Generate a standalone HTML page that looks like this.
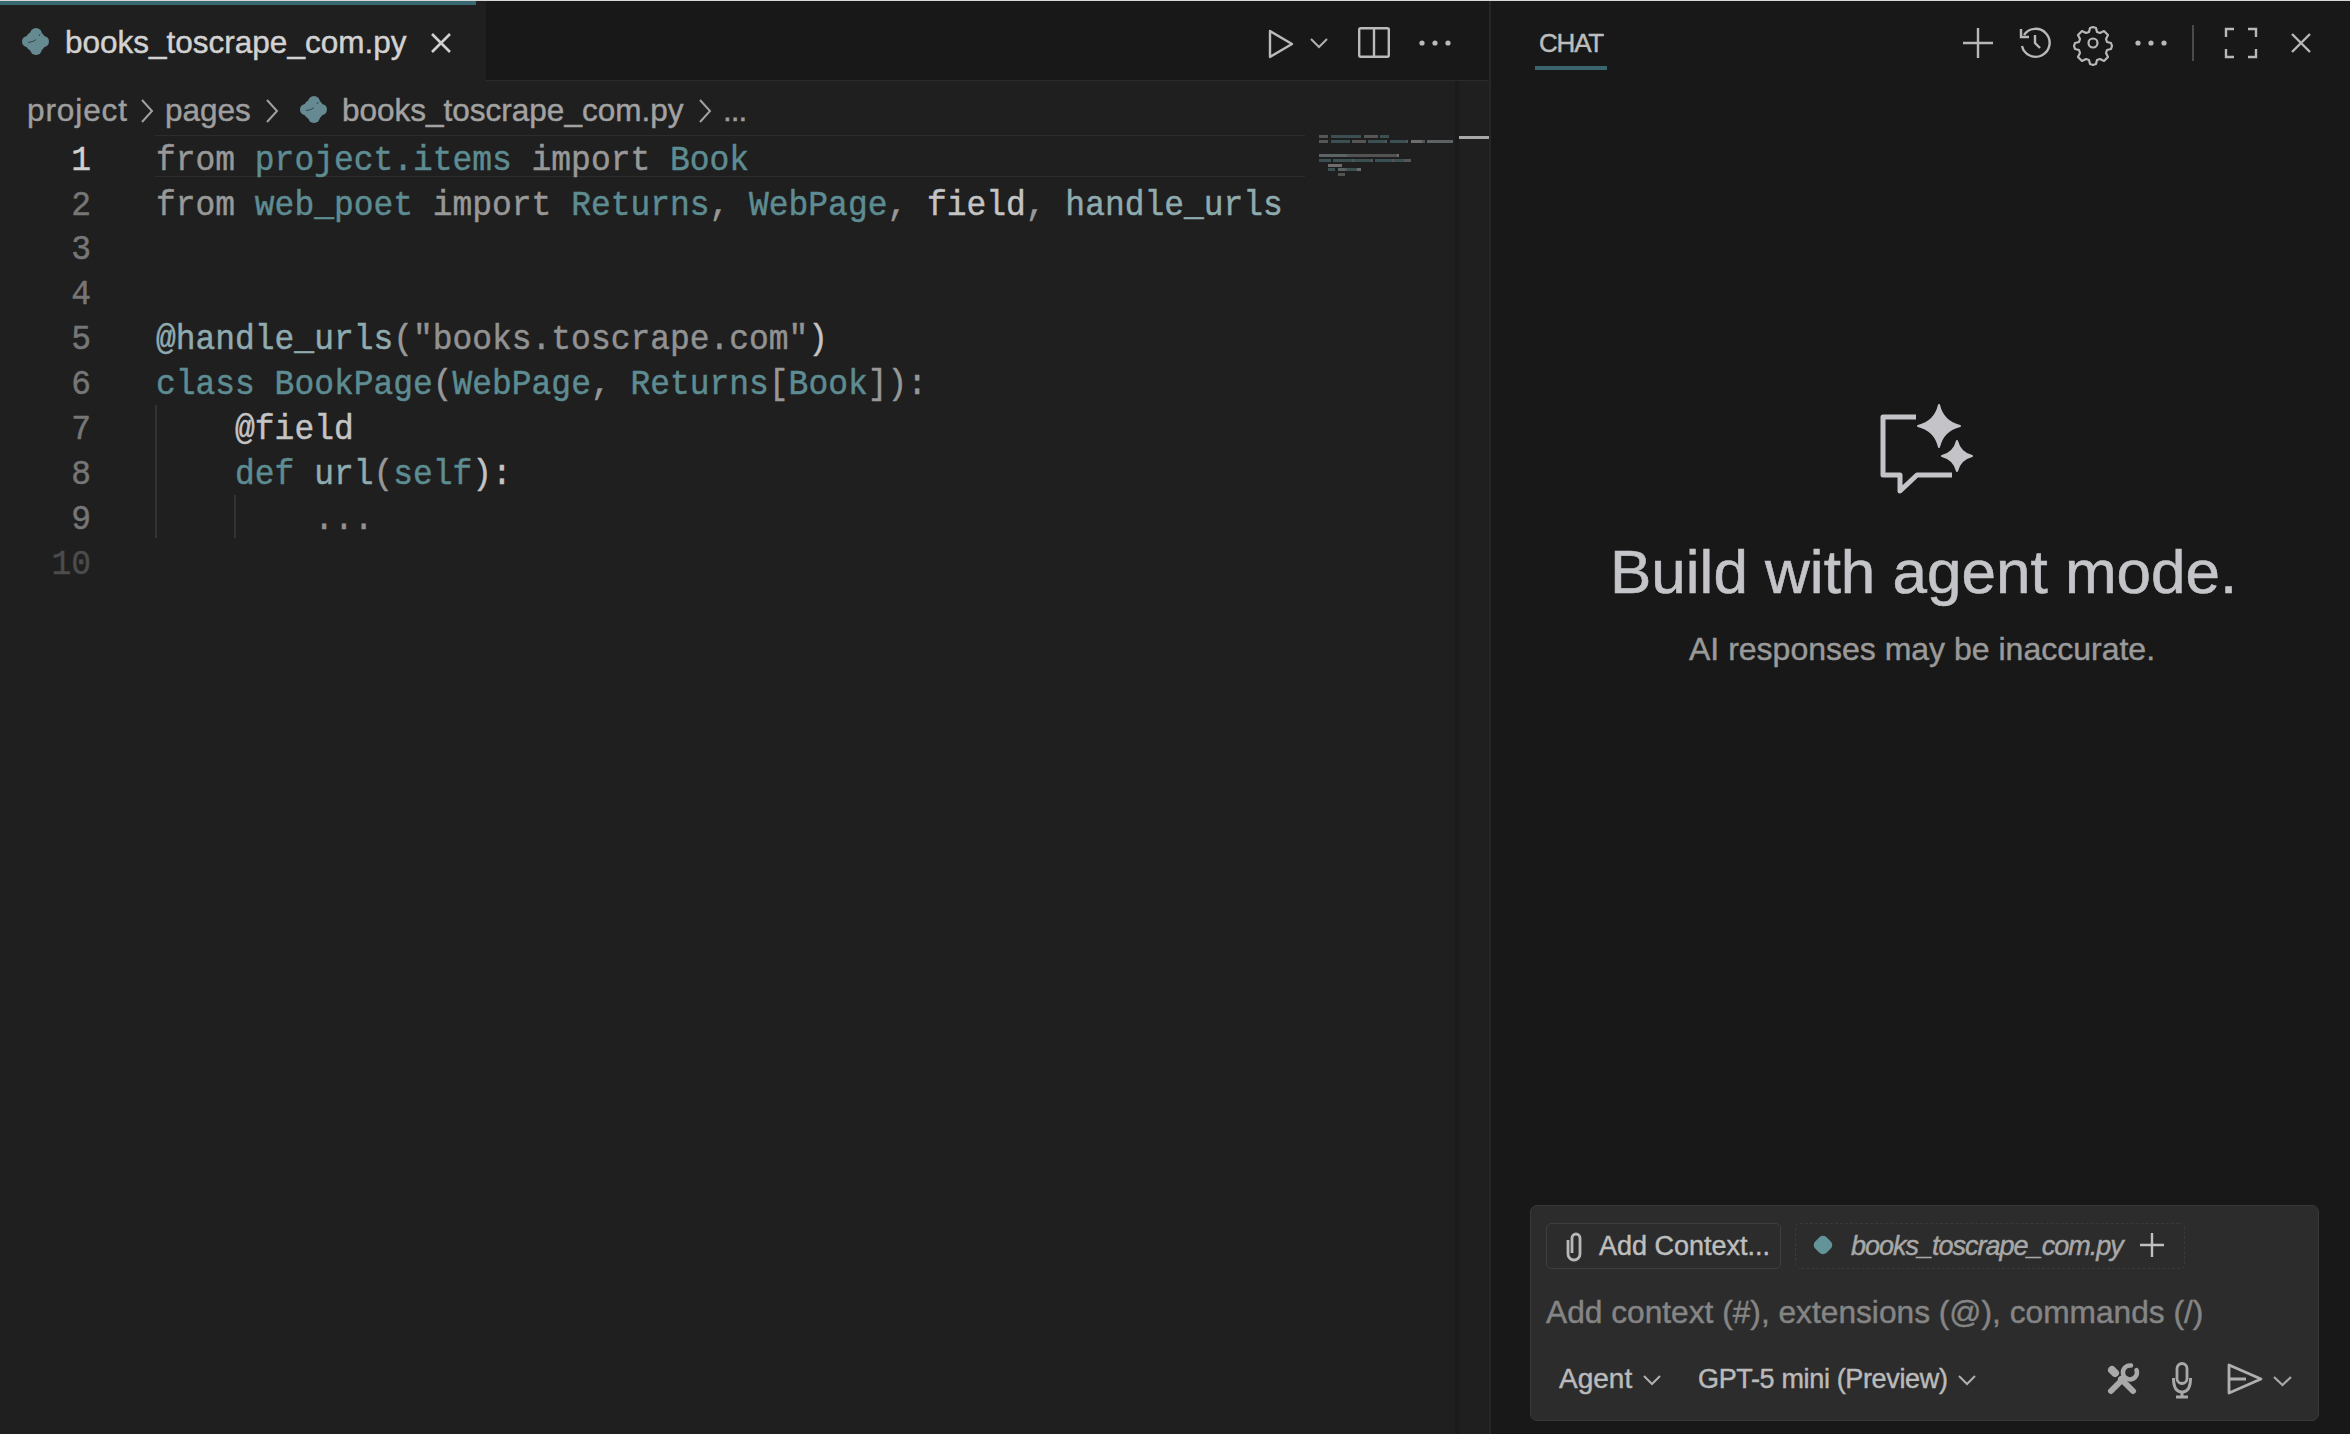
<!DOCTYPE html>
<html><head><meta charset="utf-8">
<style>
html,body{margin:0;padding:0;}
body{width:2350px;height:1434px;position:relative;overflow:hidden;background:#181818;font-family:"Liberation Sans",sans-serif;color:#cccccc;}
.a{position:absolute;}
.t{position:absolute;white-space:pre;line-height:normal;-webkit-text-stroke-width:0.45px;}
.mono{font-family:"Liberation Mono",monospace;}
.g{color:#989898}
.c{color:#5d8c92}
.w{color:#c4c4c4}
.s{color:#929292}
.y{color:#8fabaf}
.code{transform:scaleY(1.08);transform-origin:0 27.4px}
svg{position:absolute;overflow:visible}
</style></head>
<body>
<div class="a" style="left:0;top:0;width:2350px;height:1px;background:#d8d8d8"></div>

<!-- ===== EDITOR ===== -->
<div class="a" style="left:0;top:1px;width:1490px;height:1433px;background:#1f1f1f"></div>
<div class="a" style="left:0;top:1px;width:1490px;height:80px;background:#181818"></div>
<div class="a" style="left:486px;top:80px;width:1004px;height:1px;background:#2a2a2a"></div>
<div class="a" style="left:0;top:1px;width:486px;height:80px;background:#1f1f1f"></div>
<div class="a" style="left:0;top:1px;width:476px;height:4px;background:#386870"></div>

<!-- python icon tab -->
<svg style="left:22px;top:28px" width="27" height="27" viewBox="0 0 27 27"><g fill="#668a92"><rect x="8" y="0" width="12" height="27" rx="6"/><rect x="0" y="8" width="27" height="11" rx="5.5"/><circle cx="13.5" cy="13.5" r="10.5"/></g><path d="M6 14.5L11 13.5L14 11.5M17 8L18 6" stroke="#33474c" stroke-width="1" fill="none"/></svg>
<div class="t" style="left:65px;top:23.5px;font-size:31.5px;color:#d2d2d2">books_toscrape_com.py</div>
<svg style="left:431px;top:33px" width="20" height="20" viewBox="0 0 20 20"><path d="M1 1L19 19M19 1L1 19" stroke="#d0d0d0" stroke-width="2.6"/></svg>

<!-- editor toolbar -->
<svg style="left:1268px;top:29px" width="26" height="30" viewBox="0 0 26 30"><path d="M2 2L24 15L2 28Z" fill="none" stroke="#bababa" stroke-width="2.4" stroke-linejoin="round"/></svg>
<svg style="left:1310px;top:38px" width="18" height="10" viewBox="0 0 18 10"><path d="M1 1L9 9L17 1" fill="none" stroke="#b0b0b0" stroke-width="2"/></svg>
<svg style="left:1358px;top:27px" width="32" height="31" viewBox="0 0 32 31"><rect x="1.2" y="1.2" width="29.6" height="28.6" rx="1.5" fill="none" stroke="#bababa" stroke-width="2.4"/><path d="M16 1V30" stroke="#bababa" stroke-width="2.4"/></svg>
<svg style="left:1419px;top:40px" width="32" height="6" viewBox="0 0 32 6"><circle cx="3" cy="3" r="2.6" fill="#bababa"/><circle cx="16" cy="3" r="2.6" fill="#bababa"/><circle cx="29" cy="3" r="2.6" fill="#bababa"/></svg>

<!-- breadcrumb -->
<div class="t" style="left:27px;top:91.5px;font-size:31.5px;color:#9e9e9e;letter-spacing:0.9px">project</div>
<svg style="left:140px;top:99px" width="14" height="24" viewBox="0 0 14 24"><path d="M2 1L12 12L2 23" fill="none" stroke="#a0a0a0" stroke-width="2"/></svg>
<div class="t" style="left:165px;top:91.5px;font-size:31.5px;color:#9e9e9e">pages</div>
<svg style="left:265px;top:99px" width="14" height="24" viewBox="0 0 14 24"><path d="M2 1L12 12L2 23" fill="none" stroke="#a0a0a0" stroke-width="2"/></svg>
<svg style="left:300px;top:96px" width="27" height="27" viewBox="0 0 27 27"><g fill="#668a92"><rect x="8" y="0" width="12" height="27" rx="6"/><rect x="0" y="8" width="27" height="11" rx="5.5"/><circle cx="13.5" cy="13.5" r="10.5"/></g><path d="M6 14.5L11 13.5L14 11.5M17 8L18 6" stroke="#33474c" stroke-width="1" fill="none"/></svg>
<div class="t" style="left:342px;top:91.5px;font-size:31.5px;color:#a2a2a2">books_toscrape_com.py</div>
<svg style="left:698px;top:99px" width="14" height="24" viewBox="0 0 14 24"><path d="M2 1L12 12L2 23" fill="none" stroke="#a0a0a0" stroke-width="2"/></svg>
<div class="t" style="left:723px;top:91.5px;font-size:31.5px;color:#9e9e9e;letter-spacing:-1px">...</div>

<!-- current line highlight -->
<div class="a" style="left:155px;top:135px;width:1150px;height:1px;background:#2c2c2c"></div>
<div class="a" style="left:155px;top:176px;width:1150px;height:1px;background:#2c2c2c"></div>

<!-- indent guides -->
<div class="a" style="left:155px;top:405px;width:2px;height:133px;background:#333333"></div>
<div class="a" style="left:234px;top:495px;width:2px;height:43px;background:#333333"></div>

<div class="t mono code" style="left:0;width:91px;text-align:right;top:142.6px;font-size:32.95px;color:#d0d0d0">1</div>
<div class="t mono code" style="left:156px;top:142.6px;font-size:32.95px"><span class="g">from </span><span class="c">project.items</span><span class="g"> import </span><span class="c">Book</span></div>
<div class="t mono code" style="left:0;width:91px;text-align:right;top:187.5px;font-size:32.95px;color:#767676">2</div>
<div class="t mono code" style="left:156px;top:187.5px;font-size:32.95px"><span class="g">from </span><span class="c">web_poet</span><span class="g"> import </span><span class="c">Returns</span><span class="g">, </span><span class="c">WebPage</span><span class="g">, </span><span class="w">field</span><span class="g">, </span><span class="y">handle_urls</span></div>
<div class="t mono code" style="left:0;width:91px;text-align:right;top:232.4px;font-size:32.95px;color:#767676">3</div>
<div class="t mono code" style="left:0;width:91px;text-align:right;top:277.3px;font-size:32.95px;color:#767676">4</div>
<div class="t mono code" style="left:0;width:91px;text-align:right;top:322.2px;font-size:32.95px;color:#767676">5</div>
<div class="t mono code" style="left:156px;top:322.2px;font-size:32.95px"><span class="y">@handle_urls</span><span class="g">(</span><span class="s">"books.toscrape.com"</span><span class="w">)</span></div>
<div class="t mono code" style="left:0;width:91px;text-align:right;top:367.1px;font-size:32.95px;color:#767676">6</div>
<div class="t mono code" style="left:156px;top:367.1px;font-size:32.95px"><span class="c">class </span><span class="c">BookPage</span><span class="g">(</span><span class="c">WebPage</span><span class="g">, </span><span class="c">Returns</span><span class="g">[</span><span class="c">Book</span><span class="g">]):</span></div>
<div class="t mono code" style="left:0;width:91px;text-align:right;top:412.0px;font-size:32.95px;color:#767676">7</div>
<div class="t mono code" style="left:156px;top:412.0px;font-size:32.95px"><span class="g">    </span><span class="w">@field</span></div>
<div class="t mono code" style="left:0;width:91px;text-align:right;top:456.9px;font-size:32.95px;color:#767676">8</div>
<div class="t mono code" style="left:156px;top:456.9px;font-size:32.95px"><span class="g">    </span><span class="c">def </span><span class="y">url</span><span class="g">(</span><span class="c">self</span><span class="w">):</span></div>
<div class="t mono code" style="left:0;width:91px;text-align:right;top:501.8px;font-size:32.95px;color:#767676">9</div>
<div class="t mono code" style="left:156px;top:501.8px;font-size:32.95px"><span class="g">        </span><span class="s">...</span></div>
<div class="t mono code" style="left:0;width:91px;text-align:right;top:546.7px;font-size:32.95px;color:#4c4c4c">10</div>
<div class="a" style="left:1319.0px;top:135.0px;width:9.4px;height:3px;background:#989898;opacity:0.45"></div>
<div class="a" style="left:1330.8px;top:135.0px;width:30.6px;height:3px;background:#5d8c92;opacity:0.45"></div>
<div class="a" style="left:1363.7px;top:135.0px;width:14.1px;height:3px;background:#989898;opacity:0.45"></div>
<div class="a" style="left:1380.1px;top:135.0px;width:9.4px;height:3px;background:#5d8c92;opacity:0.45"></div>
<div class="a" style="left:1319.0px;top:139.8px;width:9.4px;height:3px;background:#989898;opacity:0.45"></div>
<div class="a" style="left:1330.8px;top:139.8px;width:18.8px;height:3px;background:#5d8c92;opacity:0.45"></div>
<div class="a" style="left:1351.9px;top:139.8px;width:14.1px;height:3px;background:#989898;opacity:0.45"></div>
<div class="a" style="left:1368.3px;top:139.8px;width:16.4px;height:3px;background:#5d8c92;opacity:0.45"></div>
<div class="a" style="left:1384.8px;top:139.8px;width:2.4px;height:3px;background:#989898;opacity:0.45"></div>
<div class="a" style="left:1389.5px;top:139.8px;width:16.4px;height:3px;background:#5d8c92;opacity:0.45"></div>
<div class="a" style="left:1406.0px;top:139.8px;width:2.4px;height:3px;background:#989898;opacity:0.45"></div>
<div class="a" style="left:1410.7px;top:139.8px;width:11.8px;height:3px;background:#cccccc;opacity:0.45"></div>
<div class="a" style="left:1422.4px;top:139.8px;width:2.4px;height:3px;background:#989898;opacity:0.45"></div>
<div class="a" style="left:1427.1px;top:139.8px;width:25.9px;height:3px;background:#a3b6b8;opacity:0.45"></div>
<div class="a" style="left:1319.0px;top:154.0px;width:28.2px;height:3px;background:#a3b6b8;opacity:0.45"></div>
<div class="a" style="left:1347.2px;top:154.0px;width:2.4px;height:3px;background:#989898;opacity:0.45"></div>
<div class="a" style="left:1349.5px;top:154.0px;width:47.0px;height:3px;background:#929292;opacity:0.45"></div>
<div class="a" style="left:1396.5px;top:154.0px;width:2.4px;height:3px;background:#cccccc;opacity:0.45"></div>
<div class="a" style="left:1319.0px;top:158.8px;width:11.8px;height:3px;background:#5d8c92;opacity:0.45"></div>
<div class="a" style="left:1333.1px;top:158.8px;width:18.8px;height:3px;background:#5d8c92;opacity:0.45"></div>
<div class="a" style="left:1351.9px;top:158.8px;width:2.4px;height:3px;background:#989898;opacity:0.45"></div>
<div class="a" style="left:1354.2px;top:158.8px;width:16.4px;height:3px;background:#5d8c92;opacity:0.45"></div>
<div class="a" style="left:1370.7px;top:158.8px;width:2.4px;height:3px;background:#989898;opacity:0.45"></div>
<div class="a" style="left:1375.4px;top:158.8px;width:16.4px;height:3px;background:#5d8c92;opacity:0.45"></div>
<div class="a" style="left:1391.8px;top:158.8px;width:2.4px;height:3px;background:#989898;opacity:0.45"></div>
<div class="a" style="left:1394.2px;top:158.8px;width:9.4px;height:3px;background:#5d8c92;opacity:0.45"></div>
<div class="a" style="left:1403.6px;top:158.8px;width:7.1px;height:3px;background:#989898;opacity:0.45"></div>
<div class="a" style="left:1328.4px;top:163.5px;width:14.1px;height:3px;background:#cccccc;opacity:0.45"></div>
<div class="a" style="left:1328.4px;top:168.2px;width:7.1px;height:3px;background:#5d8c92;opacity:0.45"></div>
<div class="a" style="left:1337.8px;top:168.2px;width:7.1px;height:3px;background:#a3b6b8;opacity:0.45"></div>
<div class="a" style="left:1344.8px;top:168.2px;width:2.4px;height:3px;background:#989898;opacity:0.45"></div>
<div class="a" style="left:1347.2px;top:168.2px;width:9.4px;height:3px;background:#5d8c92;opacity:0.45"></div>
<div class="a" style="left:1356.6px;top:168.2px;width:4.7px;height:3px;background:#cccccc;opacity:0.45"></div>
<div class="a" style="left:1337.8px;top:173.0px;width:7.1px;height:3px;background:#929292;opacity:0.45"></div>

<!-- scrollbar -->
<div class="a" style="left:1455px;top:81px;width:4px;height:1353px;background:#1a1a1a"></div>
<div class="a" style="left:1459px;top:136px;width:30px;height:3px;background:#a8a8a8"></div>
<!-- divider -->
<div class="a" style="left:1489px;top:1px;width:2px;height:1433px;background:#262626"></div>

<!-- ===== CHAT ===== -->
<div class="t" style="left:1539px;top:28px;font-size:26px;color:#bdbdbd;letter-spacing:-1.2px">CHAT</div>
<div class="a" style="left:1535px;top:66px;width:72px;height:4px;background:#3a656c"></div>

<!-- header icons -->
<svg style="left:1963px;top:28px" width="30" height="30" viewBox="0 0 30 30"><path d="M15 0V30M0 15H30" stroke="#b8b8b8" stroke-width="2.4"/></svg>
<svg style="left:2018px;top:26px" width="34" height="34" viewBox="0 0 34 34"><path d="M6 9A14 14 0 1 1 4 20" fill="none" stroke="#b8b8b8" stroke-width="2.4"/><path d="M3 3V11H11" fill="none" stroke="#b8b8b8" stroke-width="2.4"/><path d="M17 9V17L22 22" fill="none" stroke="#b8b8b8" stroke-width="2.4"/></svg>
<svg style="left:2075px;top:25px" width="36" height="36" viewBox="0 0 36 36"><path d="M18 2l3 1 1 4 3 1 4-2 2 2 2 2-2 4 1 3 4 1 1 3-1 3-4 1-1 3 2 4-2 2-2 2-4-2-3 1-1 4-3 1-3-1-1-4-3-1-4 2-2-2-2-2 2-4-1-3-4-1-1-3 1-3 4-1 1-3-2-4 2-2 2-2 4 2 3-1 1-4z" fill="none" stroke="#b8b8b8" stroke-width="2.2" stroke-linejoin="round"/><circle cx="18" cy="18" r="4.5" fill="none" stroke="#b8b8b8" stroke-width="2.2"/></svg>
<svg style="left:2135px;top:40px" width="32" height="6" viewBox="0 0 32 6"><circle cx="3" cy="3" r="2.6" fill="#b8b8b8"/><circle cx="16" cy="3" r="2.6" fill="#b8b8b8"/><circle cx="29" cy="3" r="2.6" fill="#b8b8b8"/></svg>
<div class="a" style="left:2192px;top:25px;width:2px;height:36px;background:#4a4a4a"></div>
<svg style="left:2225px;top:28px" width="32" height="30" viewBox="0 0 32 30"><path d="M1 9V1H9M23 1H31V9M31 21V29H23M9 29H1V21" fill="none" stroke="#b8b8b8" stroke-width="2.4"/></svg>
<svg style="left:2291px;top:33px" width="20" height="20" viewBox="0 0 20 20"><path d="M1 1L19 19M19 1L1 19" stroke="#b8b8b8" stroke-width="2.4"/></svg>

<!-- sparkle chat icon -->
<svg style="left:1860px;top:395px" width="120" height="110" viewBox="0 0 120 110">
 <path d="M56 22H23V80H40V96L57 80H92" fill="none" stroke="#c4c4c8" stroke-width="5" stroke-linejoin="round"/>
 <path d="M79 10Q83 27 100 31Q83 35 79 52Q75 35 58 31Q75 27 79 10Z" fill="#c4c4c8" stroke="#c4c4c8" stroke-width="2" stroke-linejoin="round"/>
 <path d="M97 46Q100 58 112 61Q100 64 97 76Q94 64 82 61Q94 58 97 46Z" fill="#c4c4c8" stroke="#c4c4c8" stroke-width="2" stroke-linejoin="round"/>
</svg>
<div class="t" style="left:1610px;top:536px;font-size:62px;color:#c4c5c9;-webkit-text-stroke:0.6px #c4c5c9">Build with agent mode.</div>
<div class="t" style="left:1689px;top:631px;font-size:32px;color:#9a9a9a">AI responses may be inaccurate.</div>

<!-- input box -->
<div class="a" style="left:1530px;top:1205px;width:787px;height:214px;background:#2c2c2c;border:1px solid #383838;border-radius:7px"></div>
<div class="a" style="left:1546px;top:1223px;width:233px;height:44px;border:1px solid #3e3e3e;border-radius:5px"></div>
<svg style="left:1564px;top:1230px" width="20" height="32" viewBox="0 0 20 32"><path d="M4 10V24A6 6 0 0 0 16 24V8A4 4 0 0 0 8 8V23" fill="none" stroke="#b8b8b8" stroke-width="2.8"/></svg>
<div class="t" style="left:1599px;top:1230.5px;font-size:27px;color:#bebebe">Add Context...</div>
<div class="a" style="left:1795px;top:1223px;width:388px;height:44px;border:1px dashed #3a3a3a;border-radius:5px"></div>
<div class="a" style="left:1815px;top:1237px;width:16px;height:16px;background:#62949a;border-radius:5px;transform:rotate(45deg)"></div>
<div class="t" style="left:1851px;top:1230.5px;font-size:27px;color:#a8a8a8;font-style:italic;letter-spacing:-1px">books_toscrape_com.py</div>
<svg style="left:2140px;top:1233px" width="24" height="24" viewBox="0 0 24 24"><path d="M12 0V24M0 12H24" stroke="#c0c0c0" stroke-width="2.4"/></svg>

<div class="t" style="left:1546px;top:1294px;font-size:31.7px;color:#858585">Add context (#), extensions (@), commands (/)</div>

<div class="t" style="left:1559px;top:1363px;font-size:28px;color:#bababa">Agent</div>
<svg style="left:1643px;top:1375px" width="18" height="10" viewBox="0 0 18 10"><path d="M1 1L9 9L17 1" fill="none" stroke="#b0b0b0" stroke-width="2"/></svg>
<div class="t" style="left:1698px;top:1364px;font-size:27px;color:#bababa;letter-spacing:-0.35px">GPT-5 mini (Preview)</div>
<svg style="left:1958px;top:1375px" width="18" height="10" viewBox="0 0 18 10"><path d="M1 1L9 9L17 1" fill="none" stroke="#b0b0b0" stroke-width="2"/></svg>

<!-- tools -->
<svg style="left:2104px;top:1362px" width="36" height="36" viewBox="0 0 36 36"><g stroke="#a9a9a9" fill="none" stroke-linecap="round"><path d="M7 29L20 16" stroke-width="6"/><path d="M8 8L11 11" stroke-width="8"/><path d="M17 17L29 29" stroke-width="6"/><path d="M32.5 8A7 7 0 1 1 27 3.5" stroke-width="4.5"/></g></svg>
<svg style="left:2170px;top:1361px" width="24" height="40" viewBox="0 0 24 40"><g stroke="#a9a9a9" fill="none"><rect x="7" y="2.5" width="10" height="20" rx="5" stroke-width="2.8"/><path d="M3.5 17Q3.5 31 12 31Q20.5 31 20.5 17" stroke-width="3"/><path d="M12 31V35M6 36H18" stroke-width="3"/></g></svg>
<svg style="left:2226px;top:1362px" width="38" height="34" viewBox="0 0 38 34"><path d="M3 3L35 17L3 31ZM3 17H20" fill="none" stroke="#b0b0b0" stroke-width="2.8" stroke-linejoin="round"/></svg>
<svg style="left:2273px;top:1376px" width="19" height="10" viewBox="0 0 19 10"><path d="M1 1L9.5 9L18 1" fill="none" stroke="#a8a8a8" stroke-width="2.2"/></svg>

</body></html>
